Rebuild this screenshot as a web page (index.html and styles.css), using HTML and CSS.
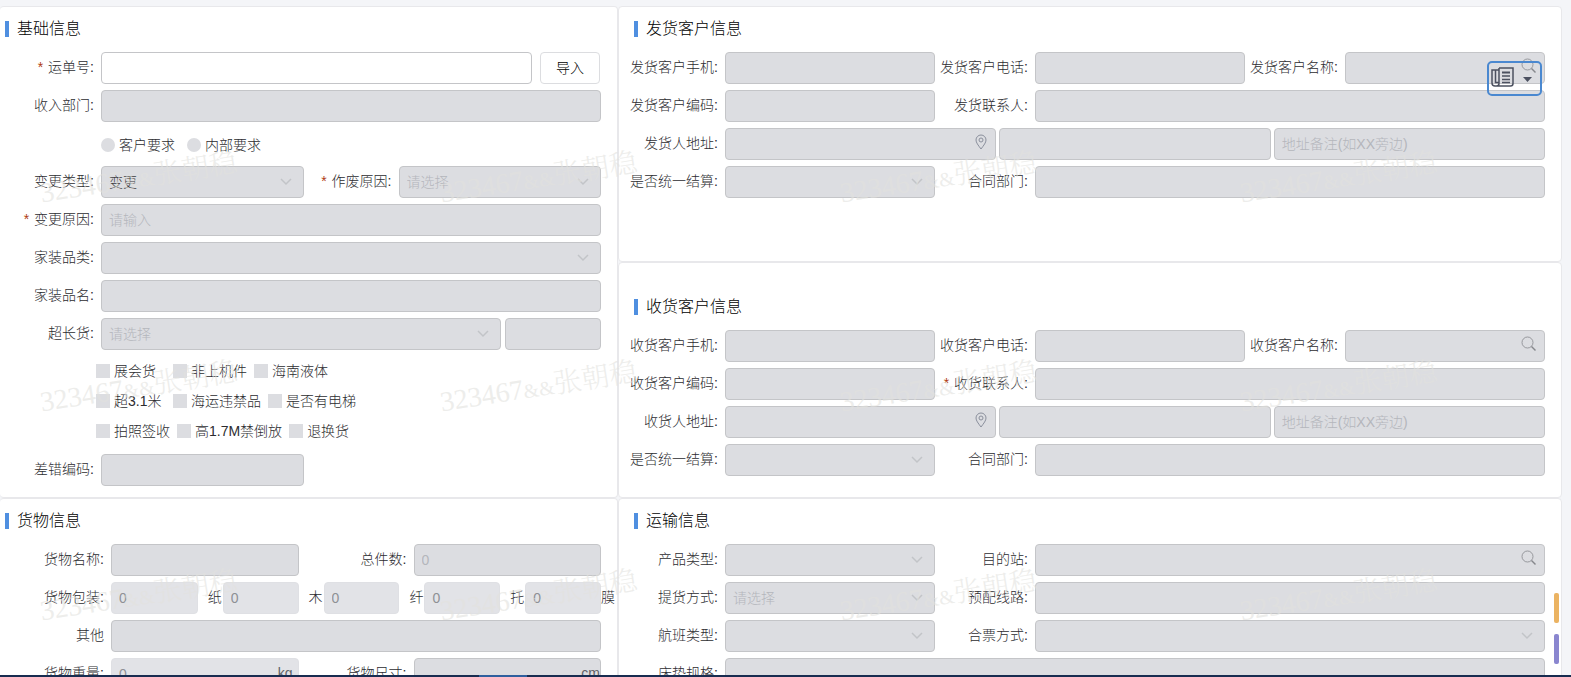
FILE: index.html
```html
<!DOCTYPE html>
<html lang="zh-CN">
<head>
<meta charset="utf-8">
<title>运单更改</title>
<link rel="stylesheet" href="styles.css">
</head>
<body>
<svg class="sprite" aria-hidden="true">
  <symbol id="i-down" viewBox="0 0 12 12"><path d="M1 3l5 5 5-5" fill="none" stroke="currentColor" stroke-width="1.5"/></symbol>
  <symbol id="i-search" viewBox="0 0 16 16"><circle cx="6.5" cy="6.5" r="5.5" fill="none" stroke="currentColor" stroke-width=".8"/><path d="M10.5 10.5L14.5 14.5" stroke="currentColor" stroke-width="1.5"/></symbol>
  <symbol id="i-pin" viewBox="0 0 12 16"><path d="M6 15C3 11 1 8.500 1 6a5 5 0 0 1 10 0c0 2.500-2 5-5 9z" fill="none" stroke="currentColor"/><circle cx="6" cy="6" r="2" fill="none" stroke="currentColor"/></symbol>
</svg>
<main class="board">
  <div class="column">
    <section class="panel panel-base">
      <h2>基础信息</h2>
      <div class="rows">
        <div class="row one">
          <label class="req" for="no">运单号:</label>
          <div class="import"><input class="box active" id="no" type="text"><button type="button" class="btn">导入</button></div>
        </div>
        <div class="row one"><label for="dept">收入部门:</label><input class="box" id="dept" type="text" disabled></div>
        <div class="radios">
          <label><input type="radio" name="req" disabled>客户要求</label>
          <label><input type="radio" name="req" disabled>内部要求</label>
        </div>
        <div class="row two">
          <label for="ctype">变更类型:</label>
          <div class="pick"><select class="box value" id="ctype" disabled><option>变更</option></select><svg class="down"><use href="#i-down"/></svg></div>
          <label class="req" for="void">作废原因:</label>
          <div class="pick"><select class="box" id="void" disabled><option>请选择</option></select><svg class="down"><use href="#i-down"/></svg></div>
        </div>
        <div class="row one"><label class="req" for="reason">变更原因:</label><input class="box" id="reason" type="text" placeholder="请输入" disabled></div>
        <div class="row one"><label for="hcat">家装品类:</label><div class="pick"><select class="box" id="hcat" disabled><option></option></select><svg class="down"><use href="#i-down"/></svg></div></div>
        <div class="row one"><label for="hname">家装品名:</label><input class="box" id="hname" type="text" disabled></div>
        <div class="row one">
          <label for="long">超长货:</label>
          <div class="long">
            <div class="pick"><select class="box" id="long" disabled><option>请选择</option></select><svg class="down"><use href="#i-down"/></svg></div>
            <input class="box" type="text" aria-label="超长货数量" disabled>
          </div>
        </div>
        <div class="checks">
          <div><label><input type="checkbox" disabled>展会货</label><label><input type="checkbox" disabled>非上机件</label><label><input type="checkbox" disabled>海南液体</label></div>
          <div><label><input type="checkbox" disabled>超3.1米</label><label><input type="checkbox" disabled>海运违禁品</label><label><input type="checkbox" disabled>是否有电梯</label></div>
          <div><label><input type="checkbox" disabled>拍照签收</label><label><input type="checkbox" disabled>高1.7M禁倒放</label><label><input type="checkbox" disabled>退换货</label></div>
        </div>
        <div class="row two"><label for="err">差错编码:</label><input class="box" id="err" type="text" disabled></div>
      </div>
    </section>

    <section class="panel panel-cargo">
      <h2>货物信息</h2>
      <div class="rows">
        <div class="row cargo">
          <label for="gname">货物名称:</label><input class="box" id="gname" type="text" disabled>
          <label for="total">总件数:</label><input class="box" id="total" type="text" placeholder="0" disabled>
        </div>
        <div class="row cargo-one">
          <label for="paper">货物包装:</label>
          <div class="packs">
            <input class="box soft first" id="paper" type="text" value="0" disabled><label for="wood">纸</label>
            <input class="box soft" id="wood" type="text" value="0" disabled><label for="fiber">木</label>
            <input class="box soft" id="fiber" type="text" value="0" disabled><label for="tray">纤</label>
            <input class="box soft" id="tray" type="text" value="0" disabled><label for="film">托</label>
            <input class="box soft" id="film" type="text" value="0" disabled><span class="tail">膜</span>
          </div>
        </div>
        <div class="row cargo-one"><label for="other">其他</label><input class="box" id="other" type="text" disabled></div>
        <div class="row cargo">
          <label for="weight">货物重量:</label><div class="pick"><input class="box soft" id="weight" type="text" value="0" disabled><span class="unit">kg</span></div>
          <label for="size">货物尺寸:</label><div class="pick"><input class="box" id="size" type="text" disabled><span class="unit edge">cm</span></div>
        </div>
      </div>
    </section>
  </div>

  <div class="column">
    <section class="panel panel-sender">
      <h2>发货客户信息</h2>
      <div class="rows">
        <div class="row three">
          <label for="s1">发货客户手机:</label><input class="box" id="s1" type="text" disabled>
          <label for="s2">发货客户电话:</label><input class="box" id="s2" type="text" disabled>
          <label for="s3">发货客户名称:</label><div class="pick"><input class="box" id="s3" type="text" disabled><svg class="search"><use href="#i-search"/></svg></div>
        </div>
        <div class="row three">
          <label for="s4">发货客户编码:</label><input class="box" id="s4" type="text" disabled>
          <label for="s5">发货联系人:</label><input class="box wide" id="s5" type="text" disabled>
        </div>
        <div class="row address">
          <label for="s6">发货人地址:</label>
          <div class="thirds">
            <div class="pick"><input class="box" id="s6" type="text" disabled><svg class="pin"><use href="#i-pin"/></svg></div>
            <input class="box" type="text" aria-label="发货详细地址" disabled>
            <input class="box" type="text" aria-label="地址备注" placeholder="地址备注(如XX旁边)" disabled>
          </div>
        </div>
        <div class="row three">
          <label for="s7">是否统一结算:</label><div class="pick"><select class="box" id="s7" disabled><option></option></select><svg class="down"><use href="#i-down"/></svg></div>
          <label for="s8">合同部门:</label><input class="box wide" id="s8" type="text" disabled>
        </div>
      </div>
    </section>

    <section class="panel panel-receiver">
      <h2>收货客户信息</h2>
      <div class="rows">
        <div class="row three">
          <label for="r1">收货客户手机:</label><input class="box" id="r1" type="text" disabled>
          <label for="r2">收货客户电话:</label><input class="box" id="r2" type="text" disabled>
          <label for="r3">收货客户名称:</label><div class="pick"><input class="box" id="r3" type="text" disabled><svg class="search"><use href="#i-search"/></svg></div>
        </div>
        <div class="row three">
          <label for="r4">收货客户编码:</label><input class="box" id="r4" type="text" disabled>
          <label class="req" for="r5">收货联系人:</label><input class="box wide" id="r5" type="text" disabled>
        </div>
        <div class="row address">
          <label for="r6">收货人地址:</label>
          <div class="thirds">
            <div class="pick"><input class="box" id="r6" type="text" disabled><svg class="pin"><use href="#i-pin"/></svg></div>
            <input class="box" type="text" aria-label="收货详细地址" disabled>
            <input class="box" type="text" aria-label="地址备注" placeholder="地址备注(如XX旁边)" disabled>
          </div>
        </div>
        <div class="row three">
          <label for="r7">是否统一结算:</label><div class="pick"><select class="box" id="r7" disabled><option></option></select><svg class="down"><use href="#i-down"/></svg></div>
          <label for="r8">合同部门:</label><input class="box wide" id="r8" type="text" disabled>
        </div>
      </div>
    </section>

    <section class="panel panel-transport">
      <h2>运输信息</h2>
      <div class="rows">
        <div class="row three">
          <label for="t1">产品类型:</label><div class="pick"><select class="box" id="t1" disabled><option></option></select><svg class="down"><use href="#i-down"/></svg></div>
          <label for="t2">目的站:</label><div class="pick wide"><input class="box" id="t2" type="text" disabled><svg class="search"><use href="#i-search"/></svg></div>
        </div>
        <div class="row three">
          <label for="t3">提货方式:</label><div class="pick"><select class="box" id="t3" disabled><option>请选择</option></select><svg class="down"><use href="#i-down"/></svg></div>
          <label for="t4">预配线路:</label><input class="box wide" id="t4" type="text" disabled>
        </div>
        <div class="row three">
          <label for="t5">航班类型:</label><div class="pick"><select class="box" id="t5" disabled><option></option></select><svg class="down"><use href="#i-down"/></svg></div>
          <label for="t6">合票方式:</label><div class="pick wide"><select class="box" id="t6" disabled><option></option></select><svg class="down"><use href="#i-down"/></svg></div>
        </div>
        <div class="row address"><label for="t7">床垫规格:</label><input class="box" id="t7" type="text" disabled></div>
      </div>
    </section>
  </div>
</main>

<div class="marks" aria-hidden="true">
  <span>323467<i>&amp;&amp;</i>张朝稳</span><span>323467<i>&amp;&amp;</i>张朝稳</span><span>323467<i>&amp;&amp;</i>张朝稳</span><span>323467<i>&amp;&amp;</i>张朝稳</span>
  <span>323467<i>&amp;&amp;</i>张朝稳</span><span>323467<i>&amp;&amp;</i>张朝稳</span><span>323467<i>&amp;&amp;</i>张朝稳</span><span>323467<i>&amp;&amp;</i>张朝稳</span>
  <span>323467<i>&amp;&amp;</i>张朝稳</span><span>323467<i>&amp;&amp;</i>张朝稳</span><span>323467<i>&amp;&amp;</i>张朝稳</span><span>323467<i>&amp;&amp;</i>张朝稳</span>
</div>

<button type="button" class="floater" aria-label="更多">
  <svg class="news" viewBox="0 0 23 20" fill="none" stroke="currentColor" stroke-width="1.5">
    <path d="M8 1h14v15.500a2.500 2.500 0 0 1-2.500 2.500H4a3 3 0 0 1-3-3V3h7M8 1v15.500a2.500 2.500 0 0 1-2.500 2.500M4.500 3v12.500H8"/>
    <path d="M11 5.500h8" stroke-width="2"/>
    <path d="M11 9h8M11 12.500h8M11 15.500h8"/>
  </svg>
  <svg class="caret" viewBox="0 0 9 5"><path d="M0 0h9L4.500 5z" fill="currentColor"/></svg>
</button>
<div class="tabs"><i class="tab orange"></i><i class="tab purple"></i></div>
<div class="taskbar"><i></i></div>
</body>
</html>
```
FILE: styles.css
```css
* { box-sizing: border-box; }
html, body { height: 100%; }
body {
  margin: 0;
  overflow: hidden;
  background: #f4f5f8;
  color: #2c2c30;
  font: 300 14px/20px "Liberation Sans", "Noto Sans CJK SC", sans-serif;
}
input, select, button { font: inherit; margin: 0; min-width: 0; }
.sprite { position: absolute; width: 0; height: 0; }

.board {
  display: grid;
  grid-template-columns: 618fr 944fr;
  align-items: start;
  padding: 6px 9px 0 0;
}
.column { display: grid; min-width: 0; }
.panel {
  min-width: 0;
  padding: 0 16px 11px 0;
  background: #fff;
  border: 1px solid #e8e8eb;
  border-radius: 4px;
}
.column:first-child .panel { border-left: 0; }
.panel-sender { padding-bottom: 63px; }
.panel-receiver { padding: 22px 16px 21px 0; }

h2 {
  display: flex;
  align-items: center;
  gap: 8px;
  height: 45px;
  margin: 0;
  padding: 0 0 1px 5px;
  color: #000;
  font-size: 16px;
  font-weight: 300;
  line-height: 24px;
}
h2::before { content: ""; width: 4px; height: 16px; background: #4f8fe0; }
.column:last-child h2 { padding-left: 15px; }

.rows { display: grid; gap: 6px; }
.row { display: grid; align-items: center; }
.one { grid-template-columns: 101px 1fr; }
.two { grid-template-columns: 101px 1fr 95px 1fr; }
.cargo { grid-template-columns: 111px 1fr 115px 1fr; }
.cargo-one { grid-template-columns: 111px 1fr; }
.three { grid-template-columns: 106px 21fr 100px 21fr 100px 20fr; }
.address { grid-template-columns: 106px 1fr; }
.wide { grid-column: span 3; }
.row > label {
  padding: 0 7px 2px 0;
  text-align: right;
  white-space: nowrap;
}
.req::before { content: "*"; margin-right: 5px; color: #b03a14; }

.box {
  display: block;
  width: 100%;
  height: 32px;
  padding: 0 7px;
  border: 1px solid #c4c5c8;
  border-radius: 4px;
  background: #dcdde1;
  color: #b4b6bc;
  opacity: 1;
  appearance: none;
}
.box::placeholder { color: #b4b6bc; opacity: 1; }
.value { color: #3c3c40; }
.active { background: #fff; color: #333; }
.soft { background: #e2e3e7; border-color: #dfe0e4; color: #8e9095; }

.pick { position: relative; min-width: 0; }
.pick svg { position: absolute; pointer-events: none; }
.down { width: 12px; height: 12px; right: 12px; top: 10px; color: #c2c4c8; }
.search { width: 16px; height: 16px; right: 8px; top: 6px; color: #85878c; }
.pin { width: 12px; height: 16px; right: 9px; top: 6px; color: #8a8f9c; }
.unit { position: absolute; right: 6px; top: 5px; color: #606266; }
.edge { right: 1px; }

.import { display: grid; grid-template-columns: 1fr 60px; gap: 8px; padding-right: 1px; }
.btn {
  height: 32px;
  padding: 0;
  border: 1px solid #dcdde0;
  border-radius: 4px;
  background: #fff;
  color: #000;
}
.long { display: grid; grid-template-columns: 400fr 96fr; gap: 4px; }
.thirds { display: grid; grid-template-columns: 1fr 1fr 1fr; gap: 3px; }

.radios { display: flex; align-items: center; gap: 12px; height: 32px; padding: 2px 0 0 101px; }
.radios label, .checks label { display: flex; align-items: center; gap: 4px; white-space: nowrap; }
.radios input, .checks input { width: 14px; height: 14px; appearance: none; background: #dcdde1; }
.radios input { border-radius: 50%; }
.checks { padding: 0 0 2px 96px; }
.checks > div { display: flex; align-items: center; gap: 7px; height: 30px; }
.checks label:first-child { min-width: 70px; }

.packs { display: grid; grid-template-columns: 87fr 25px 76fr 25px 76fr 25px 76fr 25px 76fr 0; align-items: center; }
.packs label { padding: 0 1px 2px 0; text-align: right; }
.tail { padding-bottom: 2px; white-space: nowrap; }

.marks {
  position: absolute;
  left: 39px;
  top: 160px;
  display: grid;
  grid-template-columns: repeat(4, 400px);
  grid-auto-rows: 209px;
  pointer-events: none;
  color: rgba(226, 226, 222, .6);
  font: 28px/36px "Liberation Serif", "Noto Serif CJK SC", "Noto Sans CJK SC", serif;
  font-weight: 300;
}
.marks span { width: 200px; height: 36px; white-space: nowrap; transform: rotate(-9deg); }
.marks i { font-style: normal; font-size: 20px; }

.floater {
  position: absolute;
  right: 29px;
  top: 61px;
  display: flex;
  align-items: center;
  justify-content: space-between;
  width: 55px;
  height: 35px;
  padding: 0 8px 4px 2px;
  border: 2px solid #4a88d0;
  border-radius: 5px;
  background: transparent;
  color: #4c5160;
}
.news { width: 23px; height: 20px; }
.caret { width: 9px; height: 5px; margin-top: 5px; }
.tabs { position: absolute; right: 12px; top: 593px; display: grid; gap: 11px; }
.tab { width: 5px; height: 30px; border-radius: 2px; }
.orange { background: #ebb362; }
.purple { background: #8a86cf; }
.taskbar { position: fixed; left: 0; right: 0; bottom: 0; height: 2px; padding-left: 479px; background: #182c50; }
.taskbar i { display: block; width: 48px; height: 2px; background: #2f5f9e; }
```
